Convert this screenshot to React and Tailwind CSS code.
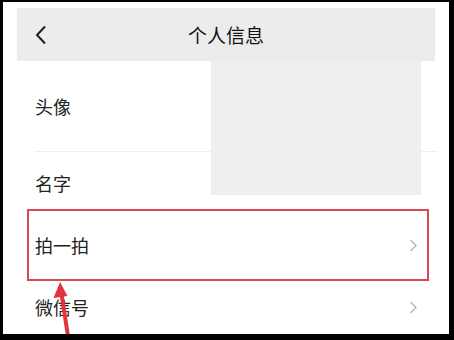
import React from "react";

const Chevron = () => (
  <svg width="9" height="13" viewBox="0 0 9 13" className="mr-[31px]">
    <path d="M1.5 1 L7 6.5 L1.5 12" fill="none" stroke="#b3b3b3" strokeWidth="1.3" />
  </svg>
);

export default function App() {
  const font = { fontFamily: '"Noto Sans CJK SC", "Noto Sans", sans-serif' };
  return (
    <div className="w-[454px] h-[340px] bg-black pt-[2px] pl-[3px] pr-[5px] pb-[6px]" style={font}>
      <div className="relative w-full h-full bg-white overflow-hidden">
        {/* header */}
        <div className="mx-[14px] mt-[6px] h-[53px] bg-[#ececec] relative flex items-center justify-center">
          <svg width="14" height="20" viewBox="0 0 14 20" className="absolute left-[17px] top-[17px]">
            <path d="M11 1.5 L3 10 L11 18.5" fill="none" stroke="#1f1f1f" strokeWidth="2" />
          </svg>
          <span className="text-[19px] text-[#111] font-normal leading-none">个人信息</span>
        </div>
        {/* list */}
        <div className="pl-[32px]">
          <div className="h-[91px] flex items-center border-b border-[#efefef] mr-[12px]">
            <span className="text-[18px] text-[#222] leading-none">头像</span>
          </div>
          <div className="h-[61px] flex items-center">
            <span className="text-[18px] text-[#222] leading-none">名字</span>
          </div>
          <div className="h-[64px] flex items-center justify-between">
            <span className="text-[18px] text-[#222] leading-none">拍一拍</span>
            <Chevron />
          </div>
          <div className="h-[60px] flex items-center justify-between">
            <span className="text-[18px] text-[#222] leading-none">微信号</span>
            <Chevron />
          </div>
        </div>
        {/* redaction block */}
        <div className="absolute left-[208px] top-[59px] w-[210px] h-[134px] bg-[#efefef]" />
        {/* highlight box */}
        <div className="absolute left-[24px] top-[207px] w-[402px] h-[72px] border-2 border-[#d84a4f]" />
        {/* arrow */}
        <svg className="absolute left-0 top-0" width="446" height="332" viewBox="0 0 446 332">
          <path d="M65 334 L58.5 292" stroke="#e2343c" strokeWidth="4" fill="none" />
          <path d="M57 280 L50.5 296 L64.5 294 Z" fill="#e2343c" />
        </svg>
      </div>
    </div>
  );
}
